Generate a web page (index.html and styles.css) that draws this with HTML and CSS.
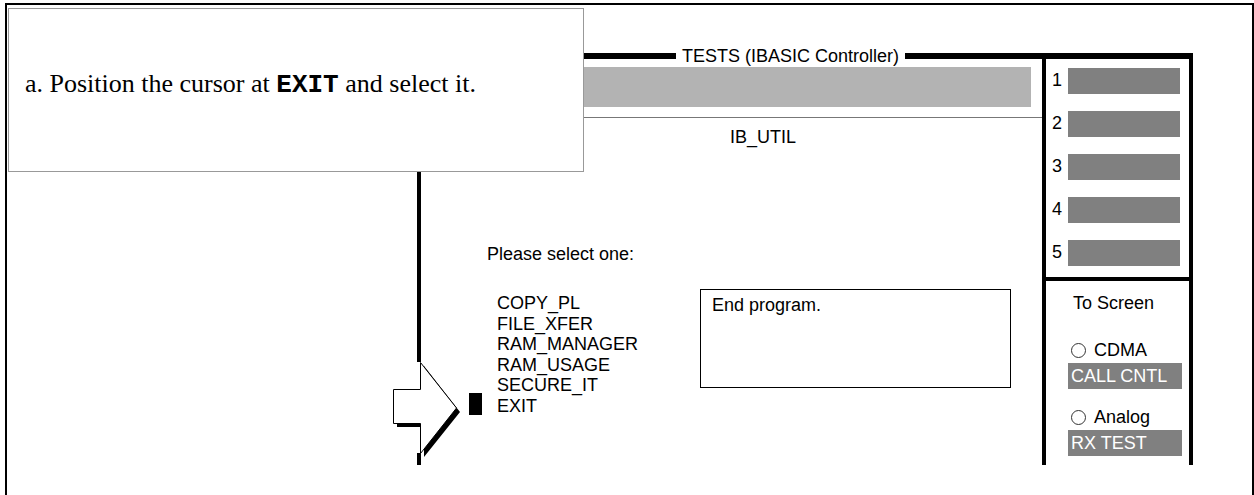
FILE: index.html
```html
<!DOCTYPE html>
<html lang="en">
<head>
    <meta charset="UTF-8">
    <title>TESTS (IBASIC Controller) - IB_UTIL</title>
    <link rel="stylesheet" href="styles.css">
</head>
<body>
    <div class="frame">
        <div class="screen">
            <div class="title-row">
                <span class="title">TESTS (IBASIC Controller)</span>
            </div>
            <div class="body-row">
                <div class="main">
                    <div class="gray-bar"></div>
                    <div class="sep"></div>
                    <div class="util">IB_UTIL</div>
                    <div class="prompt">Please select one:</div>
                    <div class="choices">
                        <ul class="list">
                            <li><span class="mark"></span>COPY_PL</li>
                            <li><span class="mark"></span>FILE_XFER</li>
                            <li><span class="mark"></span>RAM_MANAGER</li>
                            <li><span class="mark"></span>RAM_USAGE</li>
                            <li><span class="mark"></span>SECURE_IT</li>
                            <li class="current"><span class="mark"></span>EXIT</li>
                        </ul>
                        <div class="endbox">End program.</div>
                    </div>
                </div>
                <div class="panel">
                    <div class="softkeys">
                        <div class="key"><span class="num">1</span><span class="kbar"></span></div>
                        <div class="key"><span class="num">2</span><span class="kbar"></span></div>
                        <div class="key"><span class="num">3</span><span class="kbar"></span></div>
                        <div class="key"><span class="num">4</span><span class="kbar"></span></div>
                        <div class="key"><span class="num">5</span><span class="kbar"></span></div>
                    </div>
                    <div class="to-screen">
                        <div class="ts-label">To Screen</div>
                        <div class="opt"><span class="radio"></span>CDMA</div>
                        <div class="opt-bar">CALL CNTL</div>
                        <div class="opt opt-2"><span class="radio"></span>Analog</div>
                        <div class="opt-bar">RX TEST</div>
                    </div>
                </div>
            </div>
        </div>
    </div>

    <!-- pointer arrow over the screen edge -->
    <svg class="arrow" width="75" height="115" viewBox="0 0 75 115">
        <rect x="28" y="7" width="6" height="91" fill="#fff"/>
        <polygon points="9,38 36,38 36,11 72,57 36,102 36,72 9,72" fill="#000"/>
        <polygon points="5.5,34.5 32.5,34.5 32.5,7.5 68.5,53 32.5,98.5 32.5,68.5 5.5,68.5" fill="#fff" stroke="#000" stroke-width="1"/>
    </svg>

    <div class="callout">
        <p>a. Position the cursor at <code>EXIT</code> and select it.</p>
    </div>
</body>
</html>
```

FILE: styles.css
```css
body {
    margin: 0;
    width: 1254px;
    height: 495px;
    overflow: hidden;
    background-color: #fff;
    font-family: "Liberation Sans", Arial, sans-serif;
    font-size: 18px;
    color: #000;
}
.frame {
    box-sizing: border-box;
    width: 1249px;
    height: 492px;
    margin: 3px 0 0 5px;
    border: 2px solid #000;
    border-bottom: none;
}
.screen {
    width: 776px;
    margin: 48px 0 0 410px;
}
.title-row {
    display: flex;
    align-items: center;
    height: 6px;
}
.title-row::before,
.title-row::after {
    content: "";
    height: 6px;
    background-color: #000;
}
.title-row::before {
    width: 259px;
}
.title-row::after {
    flex: 1;
}
.title {
    line-height: 21px;
    padding: 0 6px;
    background-color: #fff;
    white-space: nowrap;
}
.body-row {
    display: flex;
    height: 406px;
}
.main {
    flex: 1;
    border-left: 4px solid #000;
}
.gray-bar {
    height: 40px;
    margin: 8px 11px 0 0;
    background-color: #b3b3b3;
}
.sep {
    height: 1px;
    margin-top: 10px;
    background-color: #777;
}
.util {
    line-height: 21px;
    margin-top: 9px;
    padding-left: 309px;
}
.prompt {
    line-height: 21px;
    margin-top: 96px;
    padding-left: 66px;
}
.choices {
    display: grid;
    grid-template-columns: 231px 311px;
    margin-top: 24px;
    padding-left: 48px;
}
.list {
    list-style: none;
    margin: 4px 0 0;
    padding: 0;
}
.list li {
    display: flex;
    align-items: center;
    height: 20.6px;
    line-height: 20.6px;
}
.mark {
    width: 13px;
    height: 22px;
    margin-right: 15px;
}
.current .mark {
    background-color: #000;
    transform: translateY(-2px);
}
.endbox {
    box-sizing: border-box;
    height: 99px;
    border: 1px solid #000;
    padding: 5px 11px;
    line-height: 21px;
}
.panel {
    width: 143px;
    border-left: 4px solid #000;
    border-right: 4px solid #000;
}
.softkeys {
    height: 218px;
    border-bottom: 4px solid #000;
    padding-left: 6px;
}
.key {
    display: flex;
    align-items: center;
    height: 43px;
}
.num {
    width: 16px;
    line-height: 21px;
}
.kbar {
    width: 112px;
    height: 26px;
    background-color: #808080;
}
.to-screen {
    padding-top: 12px;
}
.ts-label {
    line-height: 21px;
    padding-left: 27px;
}
.opt {
    display: flex;
    align-items: center;
    line-height: 21px;
    margin-top: 26px;
    padding-left: 25px;
}
.opt-2 {
    margin-top: 18px;
}
.radio {
    box-sizing: border-box;
    width: 15px;
    height: 15px;
    margin-right: 8px;
    border: 1px solid #333;
    border-radius: 50%;
}
.opt-bar {
    width: 111px;
    height: 26px;
    margin: 2px 0 0 22px;
    padding-left: 3px;
    line-height: 26px;
    color: #fff;
    background-color: #808080;
    white-space: nowrap;
}
.arrow {
    position: absolute;
    left: 388px;
    top: 355px;
}
.callout {
    position: absolute;
    left: 8px;
    top: 8px;
    box-sizing: border-box;
    width: 576px;
    height: 164px;
    border: 1px solid #999;
    background-color: #fff;
}
.callout p {
    margin: 0;
    padding: 60px 0 0 16px;
    font-family: "Liberation Serif", "Times New Roman", serif;
    font-size: 26px;
    line-height: 30px;
}
.callout code {
    font-family: "Liberation Mono", "Courier New", monospace;
    font-weight: bold;
}
```
